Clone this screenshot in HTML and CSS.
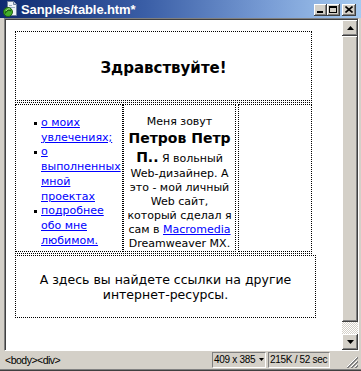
FILE: index.html
```html
<!DOCTYPE html>
<html>
<head>
<meta charset="utf-8">
<title>Sanples/table.htm*</title>
<link rel="stylesheet" href="styles.css">
</head>
<body>
<div class="window">
  <div class="titlebar">
    <svg class="ticon" width="16" height="16" viewBox="0 0 16 16">
      <polygon points="5.5,0.5 11.5,0.5 14.5,3.5 14.5,14.5 5.5,14.5" fill="#eef2f8" stroke="#6d7f9c"/>
      <polyline points="11.5,0.5 11.5,3.5 14.5,3.5" fill="#c9d3e2" stroke="#6d7f9c"/>
      <line x1="7" y1="4.5" x2="10" y2="4.5" stroke="#9fb0c8"/>
      <line x1="7" y1="6.5" x2="13" y2="6.5" stroke="#9fb0c8"/>
      <circle cx="6" cy="11" r="4.5" fill="#43b02a" stroke="#1f5e12"/>
      <path d="M3 12.5 C4.5 9 7 8.5 9 10" fill="none" stroke="#1f5e12" stroke-width="1.2"/>
      <path d="M4 10 C5 8 6.5 7.5 8 8" fill="none" stroke="#c8f0a8" stroke-width="0.8"/>
    </svg>
    <span class="title">Sanples/table.htm*</span>
    <div class="tbtns">
      <span class="tbtn tmin"><i></i></span>
      <span class="tbtn tmax"><i></i></span>
      <span class="tbtn tclose"><svg width="8" height="7" viewBox="0 0 8 7"><path d="M0.5 0.5 L7.5 6.5 M7.5 0.5 L0.5 6.5" stroke="#000" stroke-width="1.6"/></svg></span>
    </div>
  </div>
  <div class="frame">
    <div class="client">
      <div class="doc">
        <div class="head">Здравствуйте!</div>
        <div class="row">
          <div class="cell c1">
            <ul class="links">
              <li><a href="#">о моих<br>увлечениях;</a></li>
              <li><a href="#">о<br>выполненных<br>мной<br>проектах</a></li>
              <li><a href="#">подробнее<br>обо мне<br>любимом.</a></li>
            </ul>
          </div>
          <div class="cell c2">Меня зовут<br><b class="big">Петров Петр<br>П..</b> Я вольный<br>Web-дизайнер. А<br>это - мой личный<br>Web сайт,<br>который сделал я<br>сам в <a href="#">Macromedia</a><br>Dreamweaver MX.</div>
          <div class="cell c3"></div>
        </div>
        <div class="foot">А здесь вы найдете ссылки на другие<br>интернет-ресурсы.</div>
      </div>
      <div class="vscroll">
        <div class="sbtn"><svg width="7" height="4" viewBox="0 0 7 4"><polygon points="3.5,0 7,4 0,4" fill="#000"/></svg></div>
        <div class="thumb"></div>
        <div class="track"></div>
        <div class="sbtn"><svg width="7" height="4" viewBox="0 0 7 4"><polygon points="0,0 7,0 3.5,4" fill="#000"/></svg></div>
      </div>
    </div>
    <div class="status">
      <span class="tags">&lt;body&gt;&lt;div&gt;</span>
      <span class="panel p1">409 x 385 <svg width="5" height="3" viewBox="0 0 5 3"><polygon points="0,0 5,0 2.5,3" fill="#000"/></svg></span>
      <span class="panel p2">215K / 52 sec</span>
      <svg class="grip" width="12" height="12" viewBox="0 0 12 12">
        <path d="M11 1 L1 11 M11 5 L5 11 M11 9 L9 11" stroke="#fff" stroke-width="1"/>
        <path d="M12 1 L1 12 M12 2 L2 12 M12 5 L5 12 M12 6 L6 12 M12 9 L9 12 M12 10 L10 12" stroke="#808080" stroke-width="1"/>
      </svg>
    </div>
  </div>
</div>
</body>
</html>
```
FILE: styles.css
```css
html, body {
  margin: 0;
  padding: 0;
}
body {
  width: 361px;
  height: 371px;
  overflow: hidden;
  background: #d4d0c8;
  font-family: "DejaVu Sans", sans-serif;
}
.window {
  width: 361px;
  height: 371px;
  box-sizing: border-box;
  background: #d4d0c8;
  display: flex;
  flex-direction: column;
  box-shadow: inset 0 -1px #404040, inset 0 -2px #808080;
}
.titlebar {
  height: 18px;
  flex: none;
  display: flex;
  align-items: center;
  background: linear-gradient(90deg, #0e2a70 0%, #3a5ea6 40%, #7a9ed6 75%, #a6caf0 100%);
  color: #fff;
}
.ticon {
  margin: 0 0 0 2px;
  flex: none;
}
.title {
  margin-left: 3px;
  font: bold 13px "Liberation Sans", sans-serif;
  letter-spacing: -0.1px;
  flex: 1;
  white-space: nowrap;
}
.tbtns {
  display: flex;
  margin-right: 5px;
  margin-top: 1px;
}
.tbtn {
  width: 13px;
  height: 12px;
  box-sizing: border-box;
  background: #d4d0c8;
  box-shadow: inset -1px -1px #404040, inset 1px 1px #fff, inset -2px -2px #808080;
  display: flex;
  align-items: center;
  justify-content: center;
}
.tclose {
  width: 14px;
  margin-left: 2px;
}
.tmin i {
  width: 6px;
  height: 2px;
  background: #000;
  margin-top: 5px;
  margin-right: 1px;
}
.tmax i {
  width: 8px;
  height: 7px;
  box-sizing: border-box;
  border: 1px solid #000;
  border-top-width: 2px;
  margin-right: 1px;
}
.frame {
  flex: 1;
  display: flex;
  flex-direction: column;
  padding: 0 2px 3px 4px;
}
.client {
  height: 333px;
  flex: none;
  box-sizing: border-box;
  display: flex;
  border-style: solid;
  border-width: 1px;
  border-color: #808080 #fff #fff #808080;
  box-shadow: inset 1px 1px #404040;
  padding: 1px 0 0 1px;
}
.doc {
  flex: 1;
  background: #fff;
  padding: 11px 0 0 9px;
  overflow: hidden;
}
.head {
  width: 297px;
  height: 70px;
  box-sizing: border-box;
  border: 1px dotted #000;
  display: flex;
  align-items: center;
  justify-content: center;
  padding-top: 3px;
  font: bold 15px "DejaVu Sans", sans-serif;
  color: #000;
}
.row {
  width: 297px;
  display: flex;
  margin-top: 1px;
  border-top: 1px dotted #000;
  border-bottom: 1px dotted #000;
  padding: 1px 0;
}
.cell {
  height: 148px;
  box-sizing: border-box;
  border: 1px dotted #000;
  font-size: 11px;
  color: #000;
}
.c1 {
  width: 108px;
}
.c2 {
  width: 113px;
  text-align: center;
  line-height: 14px;
  padding-top: 10px;
  white-space: nowrap;
}
.c3 {
  width: 74px;
  margin-left: 2px;
}
.big {
  font-size: 14px;
  line-height: 19px;
}
a {
  color: #0000ff;
  text-decoration: underline;
}
.links {
  list-style: none;
  margin: 0;
  padding: 11px 0 0 18px;
  line-height: 14.7px;
  white-space: nowrap;
}
.links li {
  display: flex;
}
.links li::before {
  content: "";
  flex: none;
  width: 3px;
  height: 3px;
  background: #000;
  margin: 6px 4px 0 0;
}
.foot {
  width: 301px;
  height: 63px;
  box-sizing: border-box;
  margin-top: 1px;
  border: 1px dotted #000;
  display: flex;
  align-items: center;
  justify-content: center;
  text-align: center;
  font-size: 12.5px;
  line-height: 15px;
  color: #000;
}
.vscroll {
  width: 16px;
  flex: none;
  display: flex;
  flex-direction: column;
}
.sbtn {
  height: 16px;
  flex: none;
  background: #d4d0c8;
  box-shadow: inset -1px -1px #404040, inset 1px 1px #fff, inset -2px -2px #808080;
  display: flex;
  align-items: center;
  justify-content: center;
}
.thumb {
  height: 286px;
  flex: none;
  background: #d4d0c8;
  box-shadow: inset -1px -1px #404040, inset 1px 1px #fff, inset -2px -2px #808080;
}
.track {
  flex: 1;
  background-color: #fff;
  background-image: repeating-conic-gradient(#d4d0c8 0 25%, #fff 0 50%);
  background-size: 2px 2px;
}
.status {
  flex: 1;
  display: flex;
  align-items: center;
  font: 10px "Liberation Sans", sans-serif;
  color: #000;
  padding-left: 1px;
  white-space: nowrap;
}
.tags {
  flex: 1;
  font-size: 10.5px;
  letter-spacing: -0.5px;
}
.panel {
  height: 16px;
  box-sizing: border-box;
  border: 1px solid;
  border-color: #808080 #fff #fff #808080;
  display: flex;
  align-items: center;
  padding-left: 1px;
  font-size: 10px;
  letter-spacing: -0.3px;
  overflow: hidden;
}
.p1 {
  width: 54px;
  gap: 4px;
}
.p2 {
  width: 62px;
  margin-left: 2px;
}
.grip {
  margin: 4px 1px 0 16px;
}
```
